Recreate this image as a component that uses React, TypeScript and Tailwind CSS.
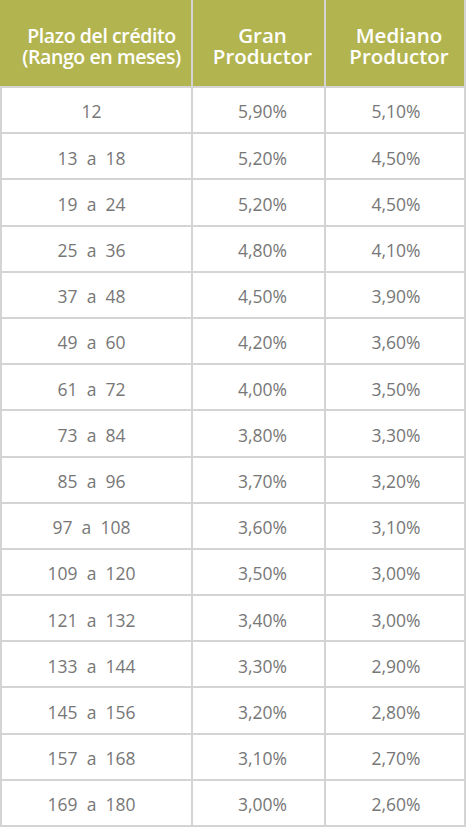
const rows: [string, string, string][] = [
  ['12', '5,90%', '5,10%'],
  ['13  a  18', '5,20%', '4,50%'],
  ['19  a  24', '5,20%', '4,50%'],
  ['25  a  36', '4,80%', '4,10%'],
  ['37  a  48', '4,50%', '3,90%'],
  ['49  a  60', '4,20%', '3,60%'],
  ['61  a  72', '4,00%', '3,50%'],
  ['73  a  84', '3,80%', '3,30%'],
  ['85  a  96', '3,70%', '3,20%'],
  ['97  a  108', '3,60%', '3,10%'],
  ['109  a  120', '3,50%', '3,00%'],
  ['121  a  132', '3,40%', '3,00%'],
  ['133  a  144', '3,30%', '2,90%'],
  ['145  a  156', '3,20%', '2,80%'],
  ['157  a  168', '3,10%', '2,70%'],
  ['169  a  180', '3,00%', '2,60%'],
];

export default function App() {
  return (
    <div className="w-[466px] h-[827px] bg-white" style={{ fontFamily: '"Open Sans", "Noto Sans", sans-serif' }}>
      <div className="grid grid-cols-[189px_131px_138px] gap-[2px] bg-[#d4d4d4] px-[2px] pb-[2px]">
        {/* header */}
        <div className="h-[86px] -ml-[2px] pl-[12px] bg-[#b2b44f] flex items-center justify-center pt-[6px] text-white font-semibold text-[19.5px] leading-[21px] tracking-[-0.4px] text-center">
          Plazo del crédito<br />(Rango en meses)
        </div>
        <div className="h-[86px] pl-[8px] bg-[#b2b44f] flex items-center justify-center pt-[6px] text-white font-semibold text-[20.5px] leading-[21px] text-center">
          Gran<br />Productor
        </div>
        <div className="h-[86px] pl-[8px] bg-[#b2b44f] flex items-center justify-center pt-[6px] text-white font-semibold text-[20.5px] leading-[21px] text-center">
          Mediano<br />Productor
        </div>

        {rows.map(([plazo, gran, mediano]) => (
          <>
            <div key={plazo + 'a'} className="h-[44.2px] bg-white flex items-center justify-center pr-[10px] pt-[3px] text-[17.5px] text-[#777777] whitespace-pre">
              {plazo}
            </div>
            <div key={plazo + 'b'} className="h-[44.2px] bg-white flex items-center justify-center pl-[8px] pt-[3px] text-[17.5px] text-[#777777]">
              {gran}
            </div>
            <div key={plazo + 'c'} className="h-[44.2px] bg-white flex items-center justify-center pl-[2px] pt-[3px] text-[17.5px] text-[#777777]">
              {mediano}
            </div>
          </>
        ))}
      </div>
    </div>
  );
}
